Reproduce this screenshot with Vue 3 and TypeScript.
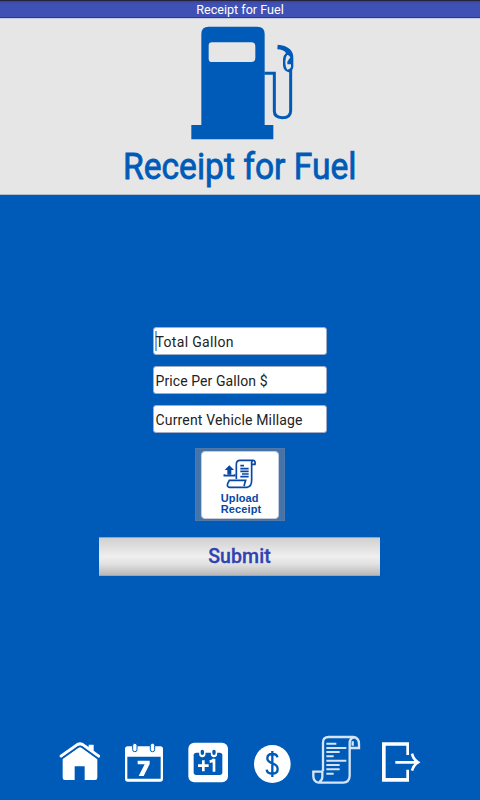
<script setup lang="ts">
import { ref } from 'vue'

interface Field {
  id: string
  label: string
  width: number
}

const title = 'Receipt for Fuel'
const fields: Field[] = [
  { id: 'gallons', label: 'Total Gallon', width: 78 },
  { id: 'price', label: 'Price Per Gallon $', width: 112 },
  { id: 'mileage', label: 'Current Vehicle Millage', width: 147 },
]
const active = ref('gallons')
</script>

<template>
  <div class="screen">
    <header class="titlebar">{{ title }}</header>

    <section class="hero">
      <svg class="pump" viewBox="0 0 390 375">
        <path fill-rule="evenodd" d="M64 315V42Q64 20 86 20H232Q254 20 254 42V315H280V358H34V315ZM96 67Q86 67 86 77V116Q86 126 96 126H214Q226 126 226 114V79Q226 67 214 67Z" />
        <path class="hose" d="M253 160H283V274Q283 293 307 293Q332 293 332 272V150" />
        <path d="M293 74Q316 75 330 88Q341 99 340 117V139Q340 152 326 157Q310 153 309 136V118Q309 107 318 99Q310 88 292 88ZM322 104Q316 110 316 124Q316 143 322 149Q329 149 333 142V133H322V125L331 112Q328 106 322 104Z" fill-rule="evenodd" />
      </svg>
      <svg class="wordmark" viewBox="0 0 240 46">
        <text x="3" y="34" textLength="233.5" lengthAdjust="spacingAndGlyphs">{{ title }}</text>
      </svg>
    </section>

    <main class="form">
      <div v-for="f in fields" :key="f.id" class="field" @click="active = f.id">
        <span v-if="active === f.id" class="caret"></span>
        <svg class="label" viewBox="0 0 170 26">
          <text x="1.5" y="18.5" :textLength="f.width">{{ f.label }}</text>
        </svg>
      </div>

      <button class="upload" type="button">
        <span class="card">
          <svg class="receipt" viewBox="105 50 120 100">
            <path d="M154 116V72Q154 60 165 60H205Q212 61 210 72H200V120Q200 139 187 141H133Q125 140 128 130L133 120H182L177 137M202 62Q198 67 201 72" />
            <path d="M166 76H177M166 85H191M166 93H191M171 101H191M166 109H191M118 102V106H149V102" />
            <path class="solid" d="M133 75L147 89H139V103H127V89H119Z" />
          </svg>
          <span class="caption">Upload<br />Receipt</span>
        </span>
      </button>

      <button class="submit" type="button">Submit</button>
    </main>

    <nav class="nav">
      <svg viewBox="-6 0 192 180">
        <path d="M38 86L90 49L142 86V143Q142 150 135 150H104V109H74V150H45Q38 150 38 143Z" />
        <path d="M29 76L81 39Q90 34 99 39L116 51V44H131V62L150 76V82L144 84L96 49Q90 45 84 49L35 84L29 81Z" />
        <path class="gap" d="M33 87L84 51Q90 47 96 51L146 87" />
      </svg>
      <svg viewBox="186 0 192 180">
        <path fill-rule="evenodd" d="M233 49H331Q339 49 339 57V147Q339 155 331 155H233Q225 155 225 147V57Q225 49 233 49ZM232 80V146H332V80Z" />
        <rect class="ring" x="248" y="40" width="13" height="25" rx="6" />
        <rect class="ring" x="301" y="40" width="13" height="25" rx="6" />
        <path d="M263 92H299V102L281 138H266L284 103H263Z" />
      </svg>
      <svg viewBox="-12 0 192 180">
        <rect x="25" y="38" width="119" height="119" rx="18" />
        <rect class="blue" x="41" y="68" width="86" height="67" rx="8" />
        <path class="notch" d="M67 65V72M102 65V72" />
        <path class="pin" d="M67 64V70M102 64V70" />
        <path class="plus" d="M54 107H86M70 91V124M89 95Q99 94 102 87V125" />
      </svg>
      <svg viewBox="180 0 192 180">
        <ellipse cx="277" cy="102" rx="55" ry="57" />
        <path class="dollar" d="M277 63V141M292 82Q291 72 277 72Q262 72 262 85Q262 95 277 100Q293 105 293 117Q293 131 277 131Q261 131 260 119" />
      </svg>
      <svg viewBox="12 0 192 180">
        <path class="scroll" d="M69 123V37Q69 21 86 21H160Q177 23 177 42V54H149V138Q148 157 130 158H56Q40 156 40 138V125H67V137Q68 150 58 156M149 54V36Q151 24 162 22M158 34V47" />
        <path class="lines" d="M79 41H109M79 54H139M79 66H119M79 79H101M79 92H139M79 105H119M79 118H119M79 131H101" />
      </svg>
      <svg viewBox="204 0 192 180">
        <path d="M246 37H327V75H319V47H257V144H319V119H327V155H246Z" />
        <path class="arrow" d="M286 97H353M336 71Q340 88 354 97Q341 105 336 122" />
      </svg>
    </nav>
  </div>
</template>

<style>
body {
  margin: 0;
}
</style>

<style scoped>
.screen {
  width: 480px;
  height: 800px;
  display: flex;
  flex-direction: column;
  overflow: hidden;
  background: #005ab7;
  font-family: Roboto, sans-serif;
}
.titlebar {
  box-sizing: border-box;
  height: 18px;
  flex: none;
  border-top: 1px solid #24243f;
  border-bottom: 1px solid #2638a8;
  background: linear-gradient(#3a449a, #4051b5 3px);
  color: #fff;
  font-size: 12.6px;
  line-height: 18px;
  text-align: center;
}
.hero {
  box-sizing: border-box;
  height: 177px;
  flex: none;
  border-top: 1px solid #c5c8df;
  border-bottom: 1px solid #b3bccd;
  padding-top: 1px;
  background: #e6e6e6;
  display: flex;
  flex-direction: column;
  align-items: center;
}
.pump {
  width: 130px;
  height: 125px;
  flex: none;
  margin-left: 10px;
  fill: #005ab7;
}
.hose {
  fill: none;
  stroke: #005ab7;
  stroke-width: 9;
}
.wordmark {
  width: 240px;
  height: 46px;
  flex: none;
  overflow: visible;
}
.wordmark text {
  font-size: 36px;
  fill: #005ab7;
  stroke: #005ab7;
  stroke-width: 0.8;
}
.form {
  flex: 1;
  padding-top: 132px;
  display: flex;
  flex-direction: column;
  align-items: center;
}
.field {
  box-sizing: border-box;
  width: 174px;
  height: 28px;
  margin-bottom: 11.2px;
  border: 1px solid #a2acc6;
  border-radius: 3px;
  background: #fff;
  position: relative;
  display: flex;
}
.caret {
  position: absolute;
  left: 1px;
  top: 3px;
  width: 2px;
  height: 20px;
  background: #66adf5;
}
.label {
  position: relative;
  width: 170px;
  height: 26px;
}
.label text {
  font-size: 14px;
  fill: #222;
}
.upload {
  box-sizing: border-box;
  width: 90px;
  height: 73px;
  margin: 3.4px 0 15px;
  padding: 2px 6px;
  border: 1px solid #5278a8;
  background: #4474aa;
  display: flex;
}
.card {
  box-sizing: border-box;
  width: 78px;
  height: 68px;
  flex: none;
  margin-left: -1px;
  border: 1px solid #c2cddd;
  border-radius: 4px;
  background: #fff;
  display: flex;
  flex-direction: column;
  align-items: center;
}
.receipt {
  width: 40px;
  height: 33.3px;
  flex: none;
  margin: 5px 0 3px;
  fill: none;
  stroke: #0747a6;
  stroke-width: 5;
}
.solid {
  fill: #0747a6;
  stroke: none;
}
.caption {
  color: #0747a6;
  font: bold 11px/11px 'Liberation Sans', sans-serif;
  letter-spacing: 0.1px;
  text-align: left;
  margin-left: 2px;
}
.submit {
  box-sizing: border-box;
  width: 281px;
  height: 39px;
  flex: none;
  margin-top: 0.6px;
  margin-right: 1px;
  padding: 1px 0 0;
  border: 0;
  border-top: 1px solid #8f9fce;
  border-bottom: 1px solid #9ba6b8;
  background: linear-gradient(#d0d0d0, #efefef 50%, #e2e2e2 70%, #b9b9b9);
  color: #3043b3;
  font: 500 19.5px/36px Roboto, sans-serif;
  letter-spacing: 0.1px;
  -webkit-text-stroke: 0.3px #3043b3;
}
.nav {
  height: 60px;
  flex: none;
  margin-bottom: 10px;
  display: grid;
  grid-template-columns: repeat(6, 64px);
  justify-content: center;
}
.nav svg {
  width: 64px;
  height: 60px;
  fill: #fff;
}
.nav .gap {
  fill: none;
  stroke: #005ab7;
  stroke-width: 5;
}
.nav .ring {
  stroke: #005ab7;
  stroke-width: 3;
}
.nav .blue {
  fill: #005ab7;
}
.notch,
.pin,
.plus,
.dollar,
.scroll,
.lines,
.arrow {
  fill: none;
  stroke: #fff;
}
.notch {
  stroke-width: 19;
  stroke-linecap: round;
}
.nav .pin {
  stroke: #005ab7;
  stroke-width: 10;
  stroke-linecap: round;
}
.plus {
  stroke-width: 8;
}
.nav .dollar {
  stroke: #005ab7;
  stroke-width: 7;
}
.scroll {
  stroke: #d5e5f7;
  stroke-width: 7;
}
.lines {
  stroke: #d5e5f7;
  stroke-width: 6;
}
.arrow {
  stroke-width: 8;
}
</style>
